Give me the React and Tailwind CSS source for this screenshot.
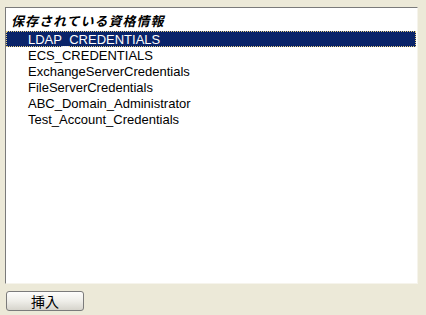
export default function App() {
  const items = [
    "LDAP_CREDENTIALS",
    "ECS_CREDENTIALS",
    "ExchangeServerCredentials",
    "FileServerCredentials",
    "ABC_Domain_Administrator",
    "Test_Account_Credentials",
  ];
  return (
    <div className="w-[426px] h-[315px] bg-[#ece9d8] overflow-hidden flex flex-col" style={{ fontFamily: '"Liberation Sans", Arial, sans-serif' }}>
      <div className="ml-[5px] mt-[7px] w-[413px] h-[277px] bg-white border-t border-l border-t-[#7a7a7a] border-l-[#7a7a7a] border-r border-b border-r-[#f6f4ec] border-b-[#f6f4ec] flex flex-col">
        <div className="h-[23px] flex items-center pl-[5px] pt-[1px]">
          <span className="text-[13px] font-bold italic tracking-[1px] text-black leading-none" style={{ fontFamily: '"Noto Sans CJK JP", sans-serif' }}>
            保存されている資格情報
          </span>
        </div>
        <div className="flex flex-col">
          {items.map((t, i) => (
            <div
              key={t}
              className={
                i === 0
                  ? "h-[16px] mr-[1px] bg-[#0a246a] text-white border border-dotted border-[#e6cf83] pl-[21px] text-[13px] leading-[16px]"
                  : "h-[16px] pl-[22px] text-[13px] leading-[18px] text-black"
              }
            >
              {t}
            </div>
          ))}
        </div>
      </div>
      <div className="ml-[6px] mt-[7px] w-[78px] h-[20px] rounded-[3px] border border-[#7b7b7b] bg-gradient-to-b from-[#fdfdfc] via-[#efeee9] to-[#d6d4cc] flex items-center justify-center">
        <span className="text-[14px] leading-none text-black" style={{ fontFamily: '"Noto Sans CJK JP", sans-serif' }}>挿入</span>
      </div>
    </div>
  );
}
